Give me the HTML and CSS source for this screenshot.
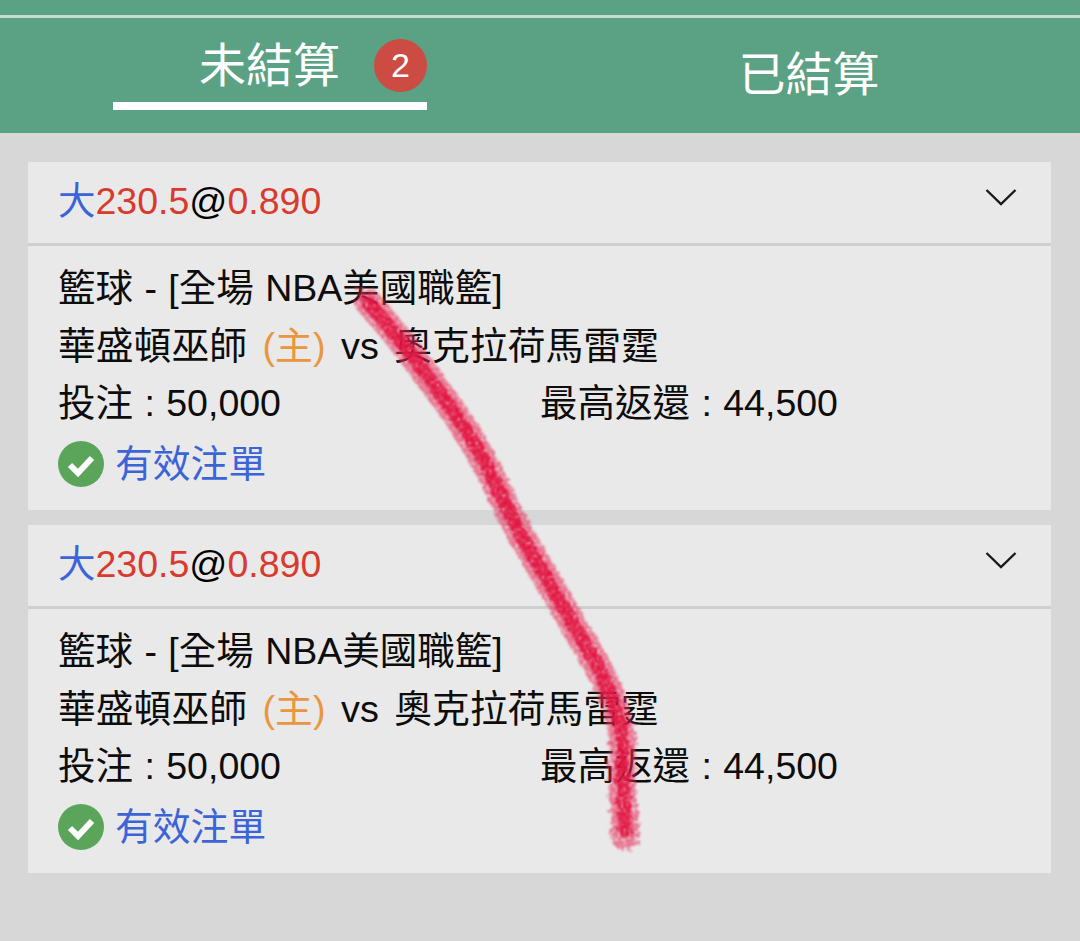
FILE: index.html
```html
<!DOCTYPE html>
<html lang="zh-Hant">
<head>
    <meta charset="UTF-8">
    <meta name="viewport" content="width=device-width, initial-scale=1.0">
    <title>未結算</title>
    <link rel="stylesheet" href="styles.css">
</head>
<body>
    <div class="top-strip"></div>
    <div class="tabs">
        <div class="tab tab-active">
            <span class="tab-label">未結算</span>
            <span class="badge">2</span>
        </div>
        <div class="tab">
            <span class="tab-label">已結算</span>
        </div>
    </div>

    <div class="list">
        <div class="card">
            <div class="card-head">
                <div class="odds"><span class="blue">大</span><span class="red">230.5</span>@<span class="red">0.890</span></div>
                <svg class="chevron" width="32" height="20" viewBox="0 0 32 20"><path d="M1.5 2 L16 16 L30.5 2" fill="none" stroke="#1a1a1a" stroke-width="2.4"/></svg>
            </div>
            <div class="card-body">
                <div class="row">籃球 - [全場 NBA美國職籃]</div>
                <div class="row row-teams">華盛頓巫師 <span class="orange">(主)</span> vs 奧克拉荷馬雷霆</div>
                <div class="row row-split">
                    <span class="col-left">投注 : 50,000</span>
                    <span>最高返還 : 44,500</span>
                </div>
                <div class="row status">
                    <svg class="check" width="46" height="46" viewBox="0 0 46 46"><circle cx="23" cy="23" r="23" fill="#5ba55b"/><path d="M12 24 L20 32 L34 17" fill="none" stroke="#fff" stroke-width="6"/></svg>
                    <span class="blue">有效注單</span>
                </div>
            </div>
        </div>

        <div class="card">
            <div class="card-head">
                <div class="odds"><span class="blue">大</span><span class="red">230.5</span>@<span class="red">0.890</span></div>
                <svg class="chevron" width="32" height="20" viewBox="0 0 32 20"><path d="M1.5 2 L16 16 L30.5 2" fill="none" stroke="#1a1a1a" stroke-width="2.4"/></svg>
            </div>
            <div class="card-body">
                <div class="row">籃球 - [全場 NBA美國職籃]</div>
                <div class="row row-teams">華盛頓巫師 <span class="orange">(主)</span> vs 奧克拉荷馬雷霆</div>
                <div class="row row-split">
                    <span class="col-left">投注 : 50,000</span>
                    <span>最高返還 : 44,500</span>
                </div>
                <div class="row status">
                    <svg class="check" width="46" height="46" viewBox="0 0 46 46"><circle cx="23" cy="23" r="23" fill="#5ba55b"/><path d="M12 24 L20 32 L34 17" fill="none" stroke="#fff" stroke-width="6"/></svg>
                    <span class="blue">有效注單</span>
                </div>
            </div>
        </div>
    </div>

    <!-- red marker scribble drawn over the page -->
    <svg class="scribble" width="1080" height="941" viewBox="0 0 1080 941">
        <defs>
            <filter id="rough" x="-20%" y="-5%" width="140%" height="110%">
                <feTurbulence type="fractalNoise" baseFrequency="0.22" numOctaves="3" seed="4" result="warp"/>
                <feDisplacementMap in="SourceGraphic" in2="warp" scale="14" result="shape"/>
                <feTurbulence type="fractalNoise" baseFrequency="0.38" numOctaves="2" seed="9"/>
                <feColorMatrix type="matrix" values="0 0 0 0 0  0 0 0 0 0  0 0 0 0 0  3.4 0 0 0 -0.75" result="speck"/>
                <feComposite in="shape" in2="speck" operator="in"/>
                <feGaussianBlur stdDeviation="1"/>
            </filter>
        </defs>
        <path class="stroke-outer" d="M368 302 C388 325 405 345 423 370 S450 405 470 437 S495 485 513 520 S540 565 563 607 S600 665 613 700 S622 745 622 770 S625 815 625 837" filter="url(#rough)"/>
        <path class="stroke-core" d="M368 302 C388 325 405 345 423 370 S450 405 470 437 S495 485 513 520 S540 565 563 607 S600 665 613 700 S622 745 622 770 S625 815 625 830" filter="url(#rough)"/>
    </svg>
</body>
</html>
```

FILE: styles.css
```css
/* Basic reset for body */
body {
    font-family: "Liberation Sans", "Noto Sans CJK TC", sans-serif;
    background-color: #d7d7d7;
    color: #0d0d0d;
    margin: 0;
    padding: 0;
    width: 1080px;
    height: 941px;
    overflow: hidden;
    position: relative;
}

.top-strip {
    height: 15px;
    background-color: #5ba183;
    border-bottom: 3px solid #c5dccf;
}

/* Tabs */
.tabs {
    height: 115px;
    background-color: #5ba183;
    display: flex;
    padding-left: 113px;
}

.tab {
    display: flex;
    align-items: center;
    justify-content: center;
    color: #fff;
    width: 314px;
    height: 110px;
    box-sizing: border-box;
}

.tab-label {
    font-size: 47px;
    line-height: 1;
    margin-top: 3px;
}

.tab-active {
    border-bottom: 8px solid #fff;
    height: 92px;
    padding-top: 11px;
    margin-right: 225px;
    justify-content: flex-end;
}

.tab-active .tab-label {
    margin-top: 0;
    margin-right: 34px;
}

.badge {
    width: 53px;
    height: 53px;
    border-radius: 50%;
    background-color: #cc4b43;
    font-size: 34px;
    display: flex;
    align-items: center;
    justify-content: center;
}

/* Bet cards */
.list {
    padding: 29px 29px 0 28px;
    display: flex;
    flex-direction: column;
    gap: 15px;
}

.card {
    background-color: #e9e9e9;
    height: 348px;
}

.card-head {
    height: 81px;
    border-bottom: 3px solid #cfcfcf;
    padding: 0 34px 0 30px;
    display: flex;
    align-items: center;
    justify-content: space-between;
}

.odds {
    font-size: 37.5px;
    color: #000;
    margin-top: -10px;
}

.chevron {
    margin-top: -10px;
}

.card-body {
    padding: 14px 30px 0;
    font-size: 37.5px;
    word-spacing: 1px;
}

.row {
    height: 57.5px;
    line-height: 57.5px;
    white-space: nowrap;
}

.row-teams {
    font-size: 37.8px;
    word-spacing: 5px;
}

.row-split {
    display: flex;
}

.col-left {
    width: 482px;
}

.status {
    display: flex;
    align-items: center;
    gap: 11px;
    margin-top: 3px;
    font-size: 37.8px;
}

.check {
    margin-left: 0;
}

.blue {
    color: #3c64d8;
}

.red {
    color: #d93a2e;
}

.orange {
    color: #e9963f;
}

/* Marker stroke over the page */
.scribble {
    position: absolute;
    left: 0;
    top: 0;
    pointer-events: none;
}

.stroke-outer,
.stroke-core {
    fill: none;
    stroke: #e21542;
    stroke-linecap: round;
}

.stroke-outer {
    stroke: #e8305a;
    stroke-width: 27;
    opacity: 0.65;
}

.stroke-core {
    stroke-width: 14;
}
```
